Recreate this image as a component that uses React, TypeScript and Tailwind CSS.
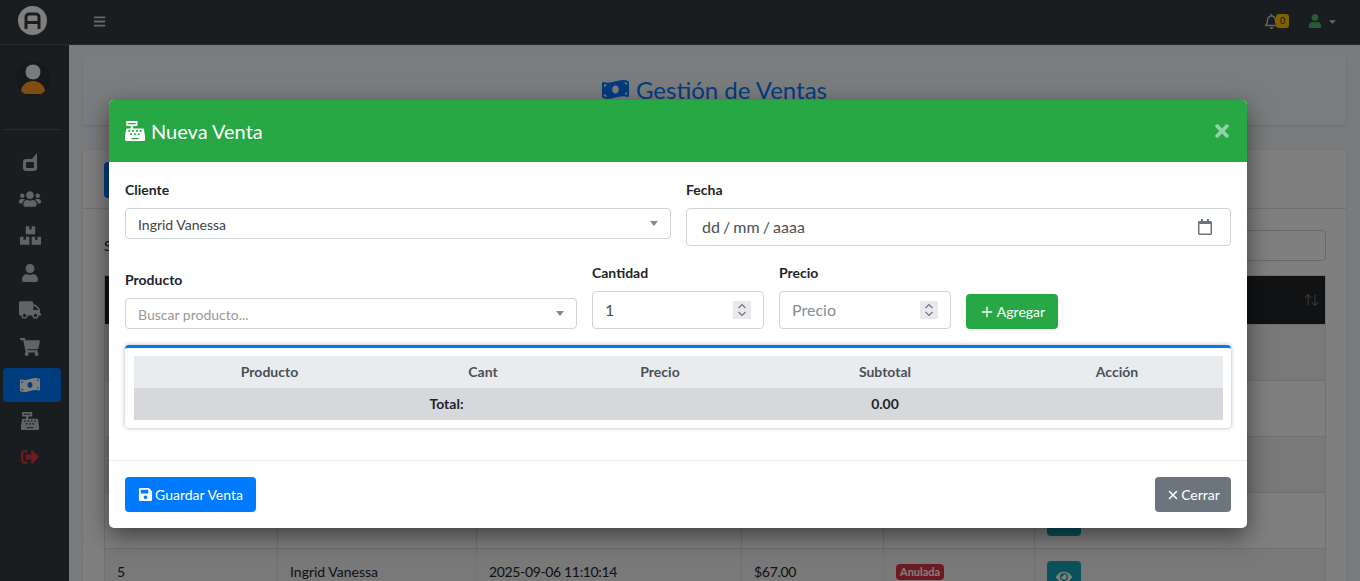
import {
  FaBars,
  FaBoxes,
  FaCashRegister,
  FaCaretDown,
  FaEye,
  FaMoneyBillWave,
  FaRegBell,
  FaRegCalendar,
  FaSave,
  FaShoppingCart,
  FaSignOutAlt,
  FaTimes,
  FaTruck,
  FaUser,
  FaUsers,
} from "react-icons/fa";
import { Plus, X } from "lucide-react";

const ROWS = [
  { id: "", name: "", date: "", total: "", state: "", action: false },
  { id: "", name: "", date: "", total: "", state: "", action: false },
  { id: "", name: "", date: "", total: "", state: "", action: false },
  { id: "", name: "", date: "", total: "", state: "", action: true },
  { id: "5", name: "Ingrid Vanessa", date: "2025-09-06 11:10:14", total: "$67.00", state: "Anulada", action: true },
];

function DashIcon() {
  return (
    <svg width="14" height="18" viewBox="0 0 14 18">
      <path
        fill="currentColor"
        fillRule="evenodd"
        d="M3 6h6l5-6v15a3 3 0 0 1-3 3H3a3 3 0 0 1-3-3V9a3 3 0 0 1 3-3Zm1 3a1 1 0 0 0-1 1v4a1 1 0 0 0 1 1h6a1 1 0 0 0 1-1v-4a1 1 0 0 0-1-1Z"
      />
    </svg>
  );
}

function Sidebar() {
  return (
    <aside className="w-[69px] shrink-0 bg-[#343a40] flex flex-col">
      <div className="h-[45px] pl-[18px] pt-[6px] border-b border-[#4b545c]">
        <div className="w-[29px] h-[29px] rounded-full bg-white flex items-center justify-center">
          <svg width="17" height="17" viewBox="0 0 17 17" fill="none" stroke="#343a40" strokeWidth="3">
            <path d="M2 17V5a3 3 0 0 1 3-3h7a3 3 0 0 1 3 3v12M2 10.5h13" />
          </svg>
        </div>
      </div>
      <div className="h-[85px] w-[58px] ml-[3px] pt-[17px] pl-[13px] border-b border-[#4f5962]">
        <svg width="34" height="34" viewBox="0 0 34 34" className="rounded-full bg-[#2c3136]">
          <path d="M5 30c0-7 6-11 12-11s12 4 12 11c0 1-1 2-2 2H7c-1 0-2-1-2-2Z" fill="#ff9a1f" />
          <circle cx="17" cy="10" r="8" fill="#f0f4f8" stroke="#343a40" strokeWidth="1" />
        </svg>
      </div>
      <nav className="w-[60px] flex flex-col items-center pt-[13px] text-[#c2c7d0]">
        <div className="h-[37px] w-full flex items-center justify-center"><DashIcon /></div>
        <div className="h-[37px] w-full flex items-center justify-center"><FaUsers size={22} /></div>
        <div className="h-[37px] w-full flex items-center justify-center"><FaBoxes size={21} /></div>
        <div className="h-[37px] w-full flex items-center justify-center"><FaUser size={18} /></div>
        <div className="h-[37px] w-full flex items-center justify-center"><FaTruck size={22} /></div>
        <div className="h-[37px] w-full flex items-center justify-center"><FaShoppingCart size={20} /></div>
        <div className="h-[34px] w-[58px] mt-[3px] self-start ml-[3px] pr-[4px] rounded bg-[#007bff] flex items-center justify-center text-white"><FaMoneyBillWave size={20} /></div>
        <div className="h-[37px] w-full flex items-center justify-center"><FaCashRegister size={18} /></div>
        <div className="h-[35px] w-full flex items-center justify-center text-[#dc3545]"><FaSignOutAlt size={18} /></div>
      </nav>
    </aside>
  );
}

function Navbar() {
  return (
    <header className="h-[45px] shrink-0 bg-[#343a40] border-b border-[#4b545c] pb-[2px] flex items-center justify-between pl-[24px] pr-[22px] text-[rgba(255,255,255,0.75)]">
      <FaBars size={13} />
      <div className="flex items-center gap-[19px]">
        <div className="flex items-center">
          <FaRegBell size={15} />
          <span className="w-[13px] h-[14px] -ml-[3px] rounded-[3px] bg-[#ffc107] text-[#1f2d3d] text-[9px] leading-[14px] text-center">0</span>
        </div>
        <div className="flex items-center gap-[5px]">
          <FaUser size={14} className="text-[#51b46f]" />
          <FaCaretDown size={11} />
        </div>
      </div>
    </header>
  );
}

function SalesTable() {
  const cols = "grid grid-cols-[172px_199px_265px_142px_151px_293px]";
  return (
    <div className="border border-[#dee2e6] text-[14px] text-[#212529]">
      <div className={`${cols} h-[48px] bg-[#212529] items-center`}>
        <div className="col-span-6 text-right pr-[10px] text-[#6c757d] text-[13px] tracking-[-3px]">↑↓</div>
      </div>
      {ROWS.map((row, i) => (
        <div key={i} className={`${cols} h-[56px] border-t border-[#dee2e6] ${i % 2 === 0 ? "bg-[rgba(0,0,0,0.05)]" : ""}`}>
          <div className="pl-[12px] pt-[12px]">{row.id}</div>
          <div className="pl-[12px] pt-[12px] border-l border-[#dee2e6]">{row.name}</div>
          <div className="pl-[12px] pt-[12px] border-l border-[#dee2e6] tracking-[-0.35px]">{row.date}</div>
          <div className="pl-[12px] pt-[12px] border-l border-[#dee2e6] tracking-[-0.3px]">{row.total}</div>
          <div className="pl-[12px] pt-[15px] border-l border-[#dee2e6]">
            {row.state && (
              <span className="block w-fit rounded px-[4px] bg-[#dc3545] text-white text-[11px] font-bold leading-[16px]">{row.state}</span>
            )}
          </div>
          <div className="pl-[12px] pt-[12px] border-l border-[#dee2e6]">
            {row.action && (
              <span className="w-[34px] h-[31px] rounded bg-[#17a2b8] text-white flex items-center justify-center"><FaEye size={16} /></span>
            )}
          </div>
        </div>
      ))}
    </div>
  );
}

function PageBehind() {
  return (
    <main className="flex-1 min-h-0 bg-[#f4f6f9] px-[14px] pt-[10px] overflow-hidden">
      <div className="h-[70px] bg-white/30 rounded shadow-sm flex items-start justify-center pt-[19px] text-[#007bff] text-[24px] leading-[32px] gap-[7px]">
        <FaMoneyBillWave size={27} className="mt-[2px]" />
        <span>Gestión de Ventas</span>
      </div>
      <div className="mt-[25px] bg-white rounded shadow-sm">
        <div className="h-[59px] border-b border-[#dee2e6] pl-[21px] pt-[12px]">
          <div className="w-[80px] h-[36px] rounded bg-[#007bff]" />
        </div>
        <div className="pl-[21px] pr-[20px] pt-[21px]">
          <div className="h-[31px] flex items-center justify-between text-[14px] text-[#212529] mb-[14px]">
            <span>S</span>
            <div className="w-[200px] h-[31px] rounded border border-[#ced4da]" />
          </div>
          <SalesTable />
        </div>
      </div>
    </main>
  );
}

function NumberField({ label, value, placeholder }: { label: string; value?: string; placeholder?: string }) {
  return (
    <div className="w-[172px] shrink-0">
      <div className="text-[14px] font-bold text-[#212529] leading-[21px] mb-[8px]">{label}</div>
      <div className="h-[38px] rounded border border-[#ced4da] flex items-center justify-between pl-[12px] pr-[12px] text-[16px]">
        {value ? <span className="text-[#495057]">{value}</span> : <span className="text-[#868e96]">{placeholder}</span>}
        <span className="w-[18px] h-[18px] bg-[#e9e9ed] flex items-center justify-center">
          <svg width="10" height="14" viewBox="0 0 10 14" fill="none" stroke="#70757a" strokeWidth="1.2">
            <path d="M1.5 5 5 1.5 8.5 5M1.5 9 5 12.5 8.5 9" />
          </svg>
        </span>
      </div>
    </div>
  );
}

function Select({ text, muted }: { text: string; muted?: boolean }) {
  return (
    <div className="h-[31px] rounded border border-[#ced4da] flex items-center justify-between pl-[12px] pr-[12px] pt-[2px] text-[14px]">
      <span className={muted ? "text-[#999]" : "text-[#444]"}>{text}</span>
      <span className="w-0 h-0 border-x-[4px] border-x-transparent border-t-[5px] border-t-[#888] -mt-[2px]" />
    </div>
  );
}

function ItemsTable() {
  const cols = "grid grid-cols-[271px_156px_198px_252px_212px]";
  return (
    <div className="mt-[16px] h-[83px] rounded border-t-[3px] border-t-[#007bff] shadow-[0_0_4px_rgba(0,0,0,0.3)] pl-[9px] pr-[8px] pt-[8px]">
      <div className={`${cols} h-[32px] pb-[2px] bg-[#e9ecef] items-center text-center text-[14px] font-bold text-[#495057]`}>
        <div>Producto</div>
        <div>Cant</div>
        <div>Precio</div>
        <div>Subtotal</div>
        <div>Acción</div>
      </div>
      <div className={`${cols} h-[32px] pb-[2px] bg-[#d6d8db] items-center text-center text-[14px] font-bold text-[#212529]`}>
        <div className="col-span-3">Total:</div>
        <div>0.00</div>
        <div />
      </div>
    </div>
  );
}

function SaleModal() {
  return (
    <div className="absolute inset-0 bg-black/50">
      <div className="absolute left-[109px] top-[100px] w-[1138px] h-[428px] bg-white rounded-[5px] shadow-[0_8px_24px_rgba(0,0,0,0.5)] flex flex-col overflow-hidden">
        <div className="h-[62px] shrink-0 bg-[#28a745] flex items-center justify-between pl-[16px] pr-[15px] text-white">
          <div className="flex items-center gap-[6px] text-[20px]">
            <FaCashRegister size={20} />
            <span>Nueva Venta</span>
          </div>
          <FaTimes size={20} className="text-white/50" />
        </div>
        <div className="flex-1 px-[16px] pt-[17px]">
          <div className="flex gap-[15px]">
            <div className="w-[546px]">
              <div className="text-[14px] font-bold text-[#212529] leading-[21px] mb-[8px]">Cliente</div>
              <Select text="Ingrid Vanessa" />
            </div>
            <div className="flex-1">
              <div className="text-[14px] font-bold text-[#212529] leading-[21px] mb-[8px]">Fecha</div>
              <div className="h-[38px] rounded border border-[#ced4da] flex items-center justify-between pl-[15px] pr-[17px] text-[16px] text-[#495057]">
                <span className="[word-spacing:-1px]">dd / mm / aaaa</span>
                <FaRegCalendar size={16} className="text-[#6c757d]" />
              </div>
            </div>
          </div>
          <div className="flex gap-[15px] mt-[16px] items-end">
            <div className="w-[452px]">
              <div className="text-[14px] font-bold text-[#212529] leading-[21px] mb-[8px]">Producto</div>
              <Select text="Buscar producto..." muted />
            </div>
            <NumberField label="Cantidad" value="1" />
            <NumberField label="Precio" placeholder="Precio" />
            <button className="h-[35px] w-[92px] rounded bg-[#28a745] text-white text-[14px] flex items-center justify-center gap-[2px]">
              <Plus size={16} />
              Agregar
            </button>
          </div>
          <ItemsTable />
        </div>
        <div className="h-[68px] shrink-0 border-t border-[#e9ecef] flex items-center justify-between px-[16px]">
          <button className="h-[35px] w-[131px] rounded bg-[#007bff] text-white text-[14px] flex items-center justify-center gap-[2px]">
            <FaSave size={15} />
            Guardar Venta
          </button>
          <button className="h-[35px] w-[76px] rounded bg-[#6c757d] text-white text-[14px] flex items-center justify-center gap-[1px]">
            <X size={14} strokeWidth={2.5} />
            Cerrar
          </button>
        </div>
      </div>
    </div>
  );
}

export default function App() {
  return (
    <div className="relative h-[581px] w-[1360px] overflow-hidden flex font-['Lato',sans-serif]">
      <Sidebar />
      <div className="flex-1 min-w-0 flex flex-col">
        <Navbar />
        <PageBehind />
      </div>
      <SaleModal />
    </div>
  );
}
